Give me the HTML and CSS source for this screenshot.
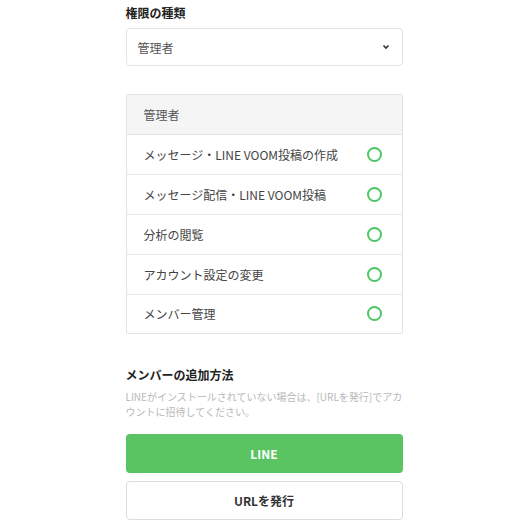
FILE: index.html
```html
<!DOCTYPE html>
<html lang="ja">
<head>
  <meta charset="UTF-8">
  <title>メンバー追加</title>
  <link rel="stylesheet" href="styles.css">
</head>
<body>
  <div class="page">
    <h3 class="label">権限の種類</h3>
    <div class="select">
      <span>管理者</span>
      <svg class="caret" width="8" height="6" viewBox="0 0 8 6"><path d="M1.5 1.5 L4 4 L6.5 1.5" fill="none" stroke="#333" stroke-width="1.6"/></svg>
    </div>

    <div class="perm">
      <div class="perm-head">管理者</div>
      <div class="perm-row"><span>メッセージ・LINE VOOM投稿の作成</span><i class="ok"></i></div>
      <div class="perm-row"><span>メッセージ配信・LINE VOOM投稿</span><i class="ok"></i></div>
      <div class="perm-row"><span>分析の閲覧</span><i class="ok"></i></div>
      <div class="perm-row"><span>アカウント設定の変更</span><i class="ok"></i></div>
      <div class="perm-row"><span>メンバー管理</span><i class="ok"></i></div>
    </div>

    <h3 class="label add">メンバーの追加方法</h3>
    <p class="note">LINEがインストールされていない場合は、[URLを発行]でアカウントに招待してください。</p>

    <button class="btn btn-line">LINE</button>
    <button class="btn btn-url">URLを発行</button>
  </div>
</body>
</html>
```

FILE: styles.css
```css
body {
  margin: 0;
  background: #fff;
  font-family: "Noto Sans CJK JP", "Noto Sans", sans-serif;
  color: #333;
}
.page {
  width: 277px;
  margin: 0 auto;
  padding-top: 4px;
}
.label {
  font-size: 12px;
  font-weight: bold;
  margin: 0 0 6px;
  line-height: 18px;
  color: #222;
}
.select {
  height: 38px;
  box-sizing: border-box;
  border: 1px solid #e3e3e3;
  border-radius: 4px;
  display: flex;
  align-items: center;
  justify-content: space-between;
  padding: 0 12px 0 11px;
  font-size: 12px;
  color: #555;
}
.perm {
  margin-top: 28px;
  border: 1px solid #e3e3e3;
  border-radius: 2px;
}
.perm-head {
  height: 39px;
  background: #f5f5f5;
  display: flex;
  align-items: center;
  padding-left: 17px;
  font-size: 12px;
  color: #555;
  border-bottom: 1px solid #e3e3e3;
}
.perm-row {
  height: 39px;
  display: flex;
  align-items: center;
  justify-content: space-between;
  padding: 0 20px 1px 17px;
  box-sizing: border-box;
  font-size: 12px;
  color: #444;
  border-bottom: 1px solid #e8e8e8;
  height: 40px;
}
.perm-row:last-child {
  height: 38px;
  border-bottom: none;
}
.ok {
  width: 11px;
  height: 11px;
  border: 2px solid #4cc764;
  border-radius: 50%;
}
.add {
  margin-top: 32px;
  margin-bottom: 5px;
}
.note {
  margin: 0 0 15px;
  font-size: 10px;
  line-height: 15px;
  color: #b8b8b8;
}
.btn {
  display: block;
  width: 100%;
  height: 39px;
  border-radius: 4px;
  font-family: inherit;
  font-size: 12px;
  font-weight: bold;
  cursor: pointer;
}
.btn-line {
  background: #5ac463;
  color: #fff;
  border: none;
}
.btn-url {
  margin-top: 8px;
  background: #fff;
  color: #333;
  border: 1px solid #dcdde0;
}
```
